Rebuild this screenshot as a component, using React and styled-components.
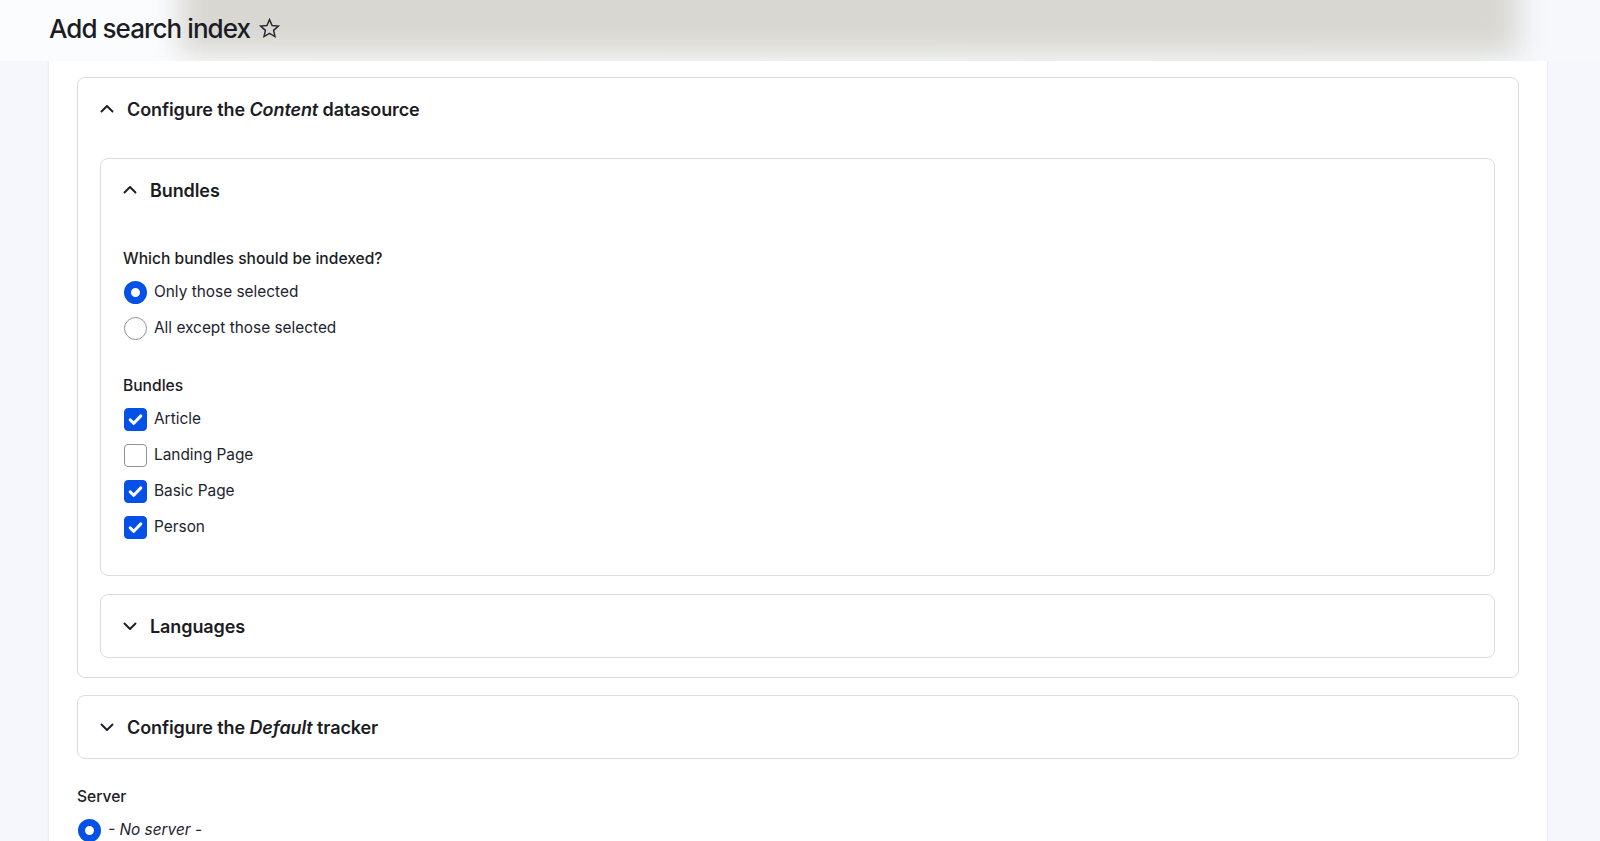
import React from "react";
import styled, { createGlobalStyle } from "styled-components";

const GlobalStyle = createGlobalStyle`
  html, body { margin: 0; padding: 0; }
  body {
    background: #f5f7fc;
    font-family: Inter, "Noto Sans", sans-serif;
    color: #222330;
    -webkit-font-smoothing: antialiased;
  }
  * { box-sizing: border-box; }
`;

const Page = styled.div`
  min-height: 841px;
  overflow: hidden;
`;

const Header = styled.header`
  position: relative;
  height: 61px;
  display: flex;
  align-items: center;
  gap: 8px;
  padding-left: 49px;
  background: linear-gradient(90deg, #fbfcfe 0%, #f6f8fc 100%);
  overflow: hidden;
`;

const Blur = styled.div`
  position: absolute;
  left: 180px;
  right: 82px;
  top: -40px;
  height: 94px;
  background: #d8d7d1;
  filter: blur(14px);
  z-index: 0;
`;

const Title = styled.h1`
  position: relative;
  z-index: 1;
  margin: 0;
  font-size: 26px;
  font-weight: 500;
  letter-spacing: -0.95px;
  color: #1b1c24;
  line-height: 1;
  padding-bottom: 4px;
`;

const StarButton = styled.span`
  position: relative;
  z-index: 1;
  display: inline-flex;
  width: 23px;
  height: 23px;
  margin-bottom: 4px;
`;

const Panel = styled.main`
  margin-left: 49px;
  width: 1498px;
  min-height: 780px;
  background: #ffffff;
  box-shadow: 0 0 3px rgba(30, 40, 70, 0.1);
  padding: 16px 28px 40px;
`;

const Card = styled.section`
  border: 1px solid #dcdde2;
  border-radius: 8px;
  background: #fff;
  margin-bottom: ${(p) => p.$mb || 0}px;
`;

const Summary = styled.div`
  height: 62px;
  display: flex;
  align-items: center;
  gap: 12px;
  padding-left: 21px;
  font-size: 18px;
  font-weight: 600;
  letter-spacing: -0.1px;
  color: #1b1c24;
  em { font-style: italic; }
`;

const Chevron = styled.svg`
  width: 16px;
  height: 16px;
  flex: none;
`;

const CardBody = styled.div`
  padding: ${(p) => p.$pad};
  display: flex;
  flex-direction: column;
  gap: ${(p) => p.$gap || 0}px;
`;

const Fieldset = styled.div`
  display: flex;
  flex-direction: column;
  margin-top: ${(p) => p.$mt || 0}px;
`;

const Label = styled.div`
  font-size: 15.6px;
  font-weight: 500;
  line-height: 20px;
  color: #1b1c24;
  margin-bottom: 5px;
`;

const Option = styled.label`
  height: 36px;
  display: flex;
  align-items: center;
  gap: 7px;
  padding-left: 1px;
  font-size: 15.4px;
  line-height: 20px;
  color: #222330;
  font-style: ${(p) => (p.$italic ? "italic" : "normal")};
`;

const RadioMark = styled.span`
  width: 23px;
  height: 23px;
  border-radius: 50%;
  flex: none;
  background: #fff;
  border: ${(p) => (p.$on ? "7px solid #0550e6" : "1px solid #8e929c")};
`;

const CheckMark = styled.span`
  width: 23px;
  height: 23px;
  border-radius: 4px;
  flex: none;
  display: flex;
  align-items: center;
  justify-content: center;
  background: ${(p) => (p.$on ? "#0550e6" : "#fff")};
  border: 1px solid ${(p) => (p.$on ? "#0550e6" : "#8e929c")};
`;

const Up = () => (
  <Chevron viewBox="0 0 16 16" fill="none" stroke="#1b1c24" strokeWidth="1.9" strokeLinecap="round" strokeLinejoin="round">
    <path d="M2.5 10.5 L8 5 L13.5 10.5" />
  </Chevron>
);

const Down = () => (
  <Chevron viewBox="0 0 16 16" fill="none" stroke="#1b1c24" strokeWidth="1.9" strokeLinecap="round" strokeLinejoin="round">
    <path d="M2.5 5.5 L8 11 L13.5 5.5" />
  </Chevron>
);

const Radio = ({ on, italic, children }) => (
  <Option $italic={italic}>
    <RadioMark $on={on} />
    {children}
  </Option>
);

const Checkbox = ({ on, children }) => (
  <Option>
    <CheckMark $on={on}>
      {on && (
        <svg width="17" height="17" viewBox="0 0 16 16" fill="none" stroke="#fff" strokeWidth="2.8" strokeLinecap="round" strokeLinejoin="round">
          <path d="M3 8.3 L6.4 11.6 L13 4.6" />
        </svg>
      )}
    </CheckMark>
    {children}
  </Option>
);

export default function App() {
  return (
    <Page>
      <GlobalStyle />
      <Header>
        <Blur />
        <Title>Add search index</Title>
        <StarButton>
          <svg width="23" height="23" viewBox="0 0 24 24" fill="none" stroke="#2a2b33" strokeWidth="1.6" strokeLinejoin="miter">
            <path d="M12 2.8 L14.7 8.9 L21.2 9.5 L16.3 13.9 L17.7 20.4 L12 17.1 L6.3 20.4 L7.7 13.9 L2.8 9.5 L9.3 8.9 Z" />
          </svg>
        </StarButton>
      </Header>
      <Panel>
        <Card $mb={17}>
          <Summary>
            <Up />
            <span>
              Configure the <em>Content</em> datasource
            </span>
          </Summary>
          <CardBody $pad="18px 23px 19px 22px" $gap={18}>
            <Card>
              <Summary>
                <Up />
                <span>Bundles</span>
              </Summary>
              <CardBody $pad="28px 22px 30px">
                <Fieldset>
                  <Label>Which bundles should be indexed?</Label>
                  <Radio on>Only those selected</Radio>
                  <Radio>All except those selected</Radio>
                </Fieldset>
                <Fieldset $mt={30}>
                  <Label>Bundles</Label>
                  <Checkbox on>Article</Checkbox>
                  <Checkbox>Landing Page</Checkbox>
                  <Checkbox on>Basic Page</Checkbox>
                  <Checkbox on>Person</Checkbox>
                </Fieldset>
              </CardBody>
            </Card>
            <Card>
              <Summary>
                <Down />
                <span>Languages</span>
              </Summary>
            </Card>
          </CardBody>
        </Card>
        <Card>
          <Summary>
            <Down />
            <span>
              Configure the <em>Default</em> tracker
            </span>
          </Summary>
        </Card>
        <Fieldset $mt={28}>
          <Label>Server</Label>
          <Radio on italic>- No server -</Radio>
        </Fieldset>
      </Panel>
    </Page>
  );
}
